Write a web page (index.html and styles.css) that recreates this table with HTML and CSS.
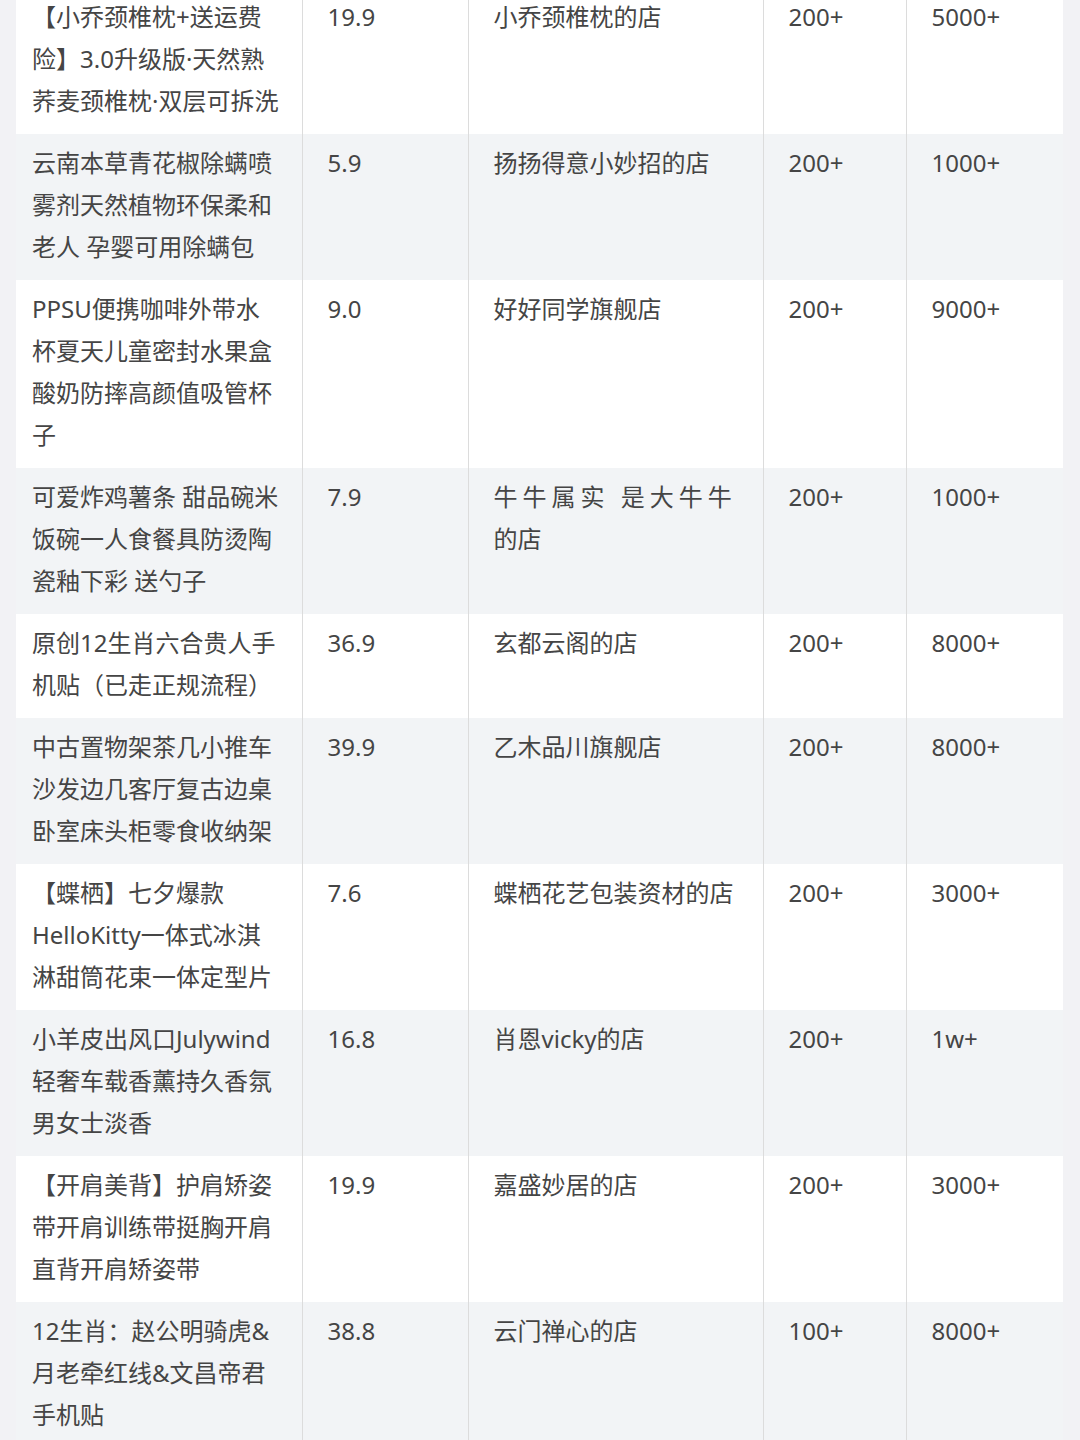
FILE: index.html
```html
<!DOCTYPE html>
<html lang="zh-CN">
<head>
<meta charset="utf-8">
<title>商品列表</title>
<link rel="stylesheet" href="styles.css">
</head>
<body>
<table class="goods">
  <colgroup>
    <col class="c-name"><col class="c-price"><col class="c-shop"><col class="c-sales"><col class="c-stock">
  </colgroup>
  <tbody>
    <tr><td>【小乔颈椎枕+送运费险】3.0升级版·天然熟荞麦颈椎枕·双层可拆洗</td><td>19.9</td><td>小乔颈椎枕的店</td><td>200+</td><td>5000+</td></tr>
    <tr><td>云南本草青花椒除螨喷雾剂天然植物环保柔和老人 孕婴可用除螨包</td><td>5.9</td><td>扬扬得意小妙招的店</td><td>200+</td><td>1000+</td></tr>
    <tr><td>PPSU便携咖啡外带水杯夏天儿童密封水果盒酸奶防摔高颜值吸管杯子</td><td>9.0</td><td>好好同学旗舰店</td><td>200+</td><td>9000+</td></tr>
    <tr><td>可爱炸鸡薯条 甜品碗米饭碗一人食餐具防烫陶瓷釉下彩 送勺子</td><td>7.9</td><td><span class="spaced">牛牛属实 是大牛牛</span>的店</td><td>200+</td><td>1000+</td></tr>
    <tr><td>原创12生肖六合贵人手机贴（已走正规流程）</td><td>36.9</td><td>玄都云阁的店</td><td>200+</td><td>8000+</td></tr>
    <tr><td>中古置物架茶几小推车沙发边几客厅复古边桌卧室床头柜零食收纳架</td><td>39.9</td><td>乙木品川旗舰店</td><td>200+</td><td>8000+</td></tr>
    <tr><td>【蝶栖】七夕爆款HelloKitty一体式冰淇淋甜筒花束一体定型片</td><td>7.6</td><td>蝶栖花艺包装资材的店</td><td>200+</td><td>3000+</td></tr>
    <tr><td>小羊皮出风口Julywind轻奢车载香薰持久香氛男女士淡香</td><td>16.8</td><td>肖恩vicky的店</td><td>200+</td><td>1w+</td></tr>
    <tr><td>【开肩美背】护肩矫姿带开肩训练带挺胸开肩直背开肩矫姿带</td><td>19.9</td><td>嘉盛妙居的店</td><td>200+</td><td>3000+</td></tr>
    <tr><td>12生肖：赵公明骑虎&amp;月老牵红线&amp;文昌帝君手机贴</td><td>38.8</td><td>云门禅心的店</td><td>100+</td><td>8000+</td></tr>
  </tbody>
</table>
</body>
</html>
```
FILE: styles.css
```css
html, body {
  margin: 0;
  padding: 0;
  background: #f2f2f5;
}

body {
  font-family: "Noto Sans", "Noto Sans CJK SC", sans-serif;
  color: #454545;
  overflow: hidden;
}

.goods {
  margin: -12px 0 0 16px;
  width: 1047px;
  table-layout: fixed;
  border-collapse: collapse;
  font-size: 24px;
  line-height: 42px;
}

.c-name { width: 286px; }
.c-price { width: 166px; }
.c-shop { width: 295px; }
.c-sales { width: 143px; }
.c-stock { width: 157px; }

.goods td {
  vertical-align: top;
  padding: 8px 16px 12px 25px;
  border-left: 1px solid #dcdcdc;
}

.goods td:first-child {
  border-left: none;
  padding: 8px 20px 12px 16px;
}

.goods td:nth-child(3) {
  padding-right: 24px;
}

.spaced {
  letter-spacing: 5px;
}

.goods tr:nth-child(odd) {
  background: #ffffff;
}

.goods tr:nth-child(even) {
  background: #f2f4f6;
}
```
